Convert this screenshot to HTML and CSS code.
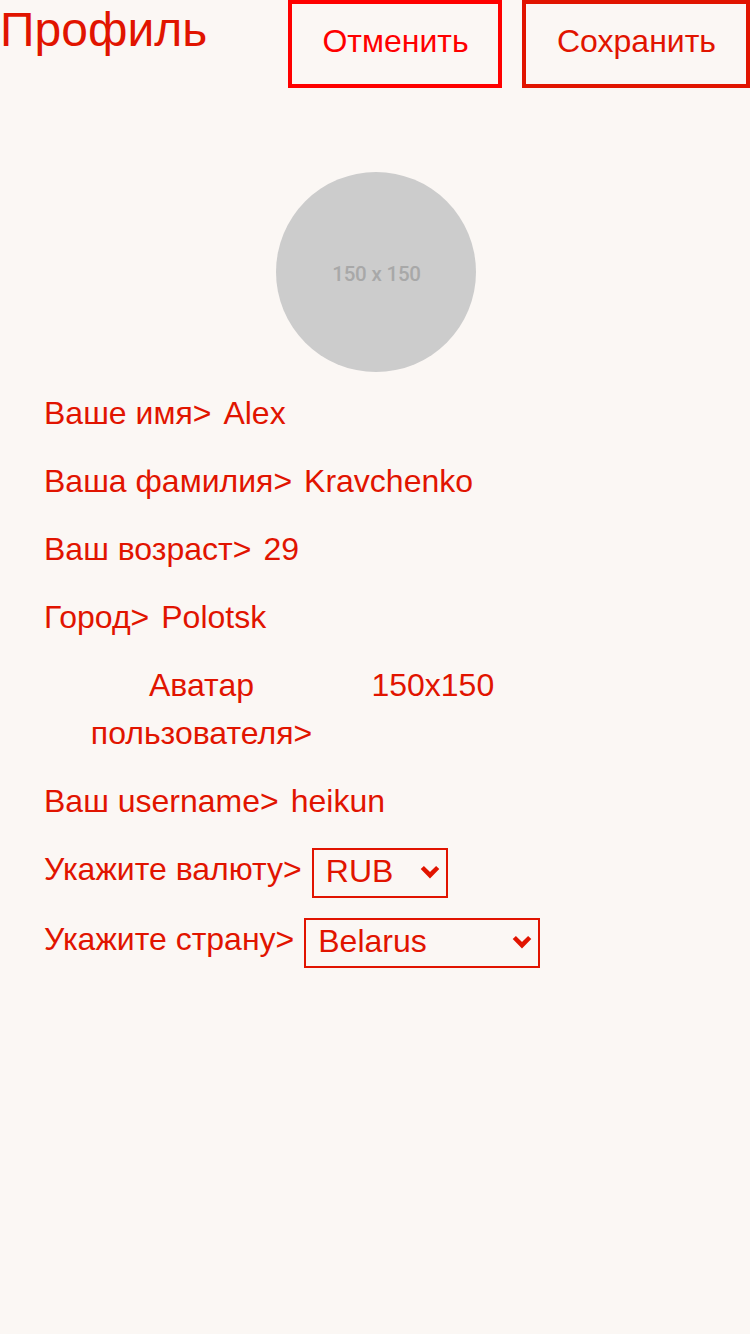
FILE: index.html
```html
<!DOCTYPE html>
<html lang="ru">
<head>
<meta charset="utf-8">
<title>Профиль</title>
<link rel="stylesheet" href="styles.css">
</head>
<body>
<header class="header">
  <h1 class="title">Профиль</h1>
  <div class="actions">
    <button class="btn btn-cancel">Отменить</button>
    <button class="btn btn-save">Сохранить</button>
  </div>
</header>
<main class="profile">
  <div class="avatar"><span class="avatar-text">150 x 150</span></div>
  <div class="row"><span class="label">Ваше имя&gt;</span><span class="value">Alex</span></div>
  <div class="row"><span class="label">Ваша фамилия&gt;</span><span class="value">Kravchenko</span></div>
  <div class="row"><span class="label">Ваш возраст&gt;</span><span class="value">29</span></div>
  <div class="row"><span class="label">Город&gt;</span><span class="value">Polotsk</span></div>
  <div class="row row-avatar"><span class="label">Аватар пользователя&gt;</span><span class="value">150x150</span></div>
  <div class="row"><span class="label">Ваш username&gt;</span><span class="value">heikun</span></div>
  <div class="row row-select"><span class="label">Укажите валюту&gt;</span>
    <div class="select select-currency"><span>RUB</span><svg class="chevron" viewBox="0 0 20 14"><path d="M2.3 2.5l7.7 7.7 7.7-7.7"/></svg></div>
  </div>
  <div class="row row-select"><span class="label">Укажите страну&gt;</span>
    <div class="select select-country"><span>Belarus</span><svg class="chevron" viewBox="0 0 20 14"><path d="M2.3 2.5l7.7 7.7 7.7-7.7"/></svg></div>
  </div>
</main>
</body>
</html>
```

FILE: styles.css
```css
* { box-sizing: border-box; }
body {
  margin: 0;
  min-height: 1334px;
  background: #fbf7f4;
  color: #e11400;
  font: 32px/48px "Liberation Sans", Arial, sans-serif;
}
.header { display: flex; justify-content: space-between; height: 88px; }
.title { margin: 0; font-size: 48px; line-height: 60px; font-weight: 400; }
.actions { display: flex; gap: 20px; }
.btn {
  height: 88px;
  padding: 0 0 6px 1px;
  border: 4px solid;
  background: transparent;
  font: inherit;
}
.btn-cancel { width: 214px; color: #ff0000; }
.btn-save { width: 228px; color: #e11400; }
.profile { padding: 84px 44px 0; }
.avatar {
  display: flex;
  align-items: center;
  justify-content: center;
  width: 200px;
  height: 200px;
  margin: 0 0 17px 232px;
  border-radius: 50%;
  background: #ccc;
}
.avatar-text {
  padding: 4px 0 0 1px;
  color: #a8a8a8;
  font: 500 20.5px/24px Roboto, sans-serif;
  letter-spacing: -0.2px;
}
.row { display: flex; gap: 12px; margin-bottom: 20px; white-space: nowrap; }
.row-avatar { gap: 0; }
.row-avatar .label { width: 315px; text-align: center; white-space: normal; }
.row-avatar .value { margin-left: 12.4px; }
.row-select { gap: 10px; height: 50px; }
.select {
  display: flex;
  justify-content: space-between;
  align-items: center;
  height: 50px;
  margin-top: 3px;
  padding: 0 6px 4px 12px;
  border: 2px solid;
}
.select-currency { width: 136px; }
.select-country { width: 236px; }
.chevron { width: 20px; height: 14px; margin-top: 2px; fill: none; stroke: currentColor; stroke-width: 4.5; }
```
